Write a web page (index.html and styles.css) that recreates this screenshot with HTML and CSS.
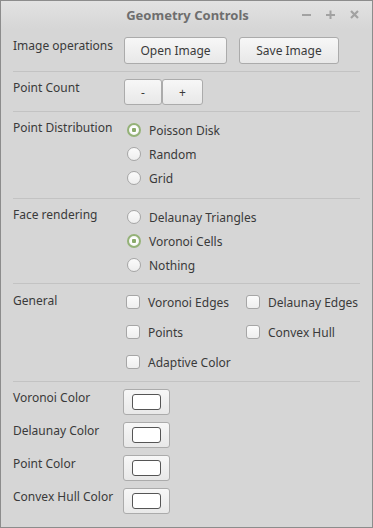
FILE: index.html
```html
<!DOCTYPE html>
<html>
<head>
    <meta charset="utf-8" />
    <title>Geometry Controls</title>
    <link rel="stylesheet" href="styles.css">
</head>
<body>
    <div class="window">
        <div class="titlebar">
            <span class="title">Geometry Controls</span>
            <div class="wm-buttons">
                <span class="wm-btn">
                    <svg width="9" height="9" viewBox="0 0 9 9"><rect x="0" y="4" width="9" height="2" fill="#a2a2a2" /></svg>
                </span>
                <span class="wm-btn">
                    <svg width="9" height="9" viewBox="0 0 9 9"><rect x="0" y="4" width="9" height="2" fill="#a2a2a2" /><rect x="3.5" y="0.5" width="2" height="9" fill="#a2a2a2" /></svg>
                </span>
                <span class="wm-btn">
                    <svg width="9" height="9" viewBox="0 0 9 9"><path d="M1 1 L8 8 M8 1 L1 8" stroke="#a2a2a2" stroke-width="2.2" /></svg>
                </span>
            </div>
        </div>

        <div class="content">
            <div class="section sec-image">
                <label class="title-label">Image operations</label>
                <div class="controls row">
                    <button class="btn btn-open">Open Image</button>
                    <button class="btn btn-save">Save Image</button>
                </div>
            </div>

            <div class="section sec-count">
                <label class="title-label">Point Count</label>
                <div class="controls row">
                    <button class="btn btn-small">-</button>
                    <button class="btn btn-small btn-plus">+</button>
                </div>
            </div>

            <div class="section sec-radio">
                <label class="title-label">Point Distribution</label>
                <div class="controls column">
                    <div class="option"><span class="radio checked"></span>Poisson Disk</div>
                    <div class="option"><span class="radio"></span>Random</div>
                    <div class="option"><span class="radio"></span>Grid</div>
                </div>
            </div>

            <div class="section sec-radio">
                <label class="title-label">Face rendering</label>
                <div class="controls column">
                    <div class="option"><span class="radio"></span>Delaunay Triangles</div>
                    <div class="option"><span class="radio checked"></span>Voronoi Cells</div>
                    <div class="option"><span class="radio"></span>Nothing</div>
                </div>
            </div>

            <div class="section sec-general">
                <label class="title-label">General</label>
                <div class="controls check-grid">
                    <div class="option"><span class="check"></span>Voronoi Edges</div>
                    <div class="option"><span class="check"></span>Delaunay Edges</div>
                    <div class="option"><span class="check"></span>Points</div>
                    <div class="option"><span class="check"></span>Convex Hull</div>
                    <div class="option"><span class="check"></span>Adaptive Color</div>
                </div>
            </div>

            <div class="section sec-colors">
                <div class="color-row">
                    <label class="title-label">Voronoi Color</label>
                    <button class="btn btn-color"><span class="swatch"></span></button>
                </div>
                <div class="color-row">
                    <label class="title-label">Delaunay Color</label>
                    <button class="btn btn-color"><span class="swatch"></span></button>
                </div>
                <div class="color-row">
                    <label class="title-label">Point Color</label>
                    <button class="btn btn-color"><span class="swatch"></span></button>
                </div>
                <div class="color-row">
                    <label class="title-label">Convex Hull Color</label>
                    <button class="btn btn-color"><span class="swatch"></span></button>
                </div>
            </div>
        </div>
    </div>
</body>
</html>
```

FILE: styles.css
```css
* {
    padding: 0;
    margin: 0;
    box-sizing: border-box;
}

body {
    width: 373px;
    height: 528px;
    background: #d6d6d6;
    font-family: "Noto Sans", "Open Sans", sans-serif;
    font-size: 12px;
    color: #3a3a3a;
}

.window {
    width: 373px;
    height: 528px;
    border: 1px solid #8c8c8c;
    background: #d6d6d6;
}

.titlebar {
    height: 28px;
    position: relative;
    display: flex;
    justify-content: center;
    align-items: center;
    background: linear-gradient(#e2e2e2, #d6d6d6);
}

.title {
    font-weight: bold;
    font-size: 13px;
    color: #6e6e6e;
    margin-left: 2px;
}

.wm-buttons {
    position: absolute;
    right: 13px;
    top: 9px;
    display: flex;
    gap: 15px;
}

.wm-btn {
    width: 9px;
    height: 9px;
    display: flex;
}

.content {
    padding: 0 12px;
}

.section {
    display: flex;
    border-bottom: 1px solid #c3c3c3;
}

.section:last-child {
    border-bottom: none;
}

.title-label {
    width: 111px;
    flex: none;
    line-height: 18px;
}

.sec-image {
    padding: 8px 0 7px;
    height: 43px;
}

.row {
    display: flex;
}

.btn {
    font-family: inherit;
    font-size: 12px;
    color: #3a3a3a;
    border: 1px solid #ababab;
    border-radius: 3px;
    background: linear-gradient(#f7f7f7, #e8e8e8);
}

.btn-open {
    width: 103px;
    height: 27px;
}

.btn-save {
    width: 100px;
    height: 27px;
    margin-left: 12px;
}

.sec-count {
    padding: 7px 0 6px;
    height: 40px;
}

.btn-small {
    width: 38px;
    height: 26px;
}

.btn-plus {
    width: 41px;
}

.sec-radio {
    padding: 6px 0 6px;
    height: 87px;
}

.sec-radio:nth-child(4) {
    height: 85px;
}

.sec-radio .title-label {
    padding-top: 1px;
}

.column {
    display: flex;
    flex-direction: column;
}

.option {
    display: flex;
    align-items: center;
    height: 24px;
    white-space: nowrap;
}

.radio {
    width: 14px;
    height: 14px;
    border-radius: 50%;
    border: 1px solid #a6a6a6;
    background: linear-gradient(#fbfbfb, #eeeeee);
    margin: 0 8px 0 3px;
    flex: none;
}

.radio.checked {
    border: 2px solid #94b277;
    background: radial-gradient(circle, #8aaa6b 0, #8aaa6b 2px, #ffffff 2.5px, #f4f4f4 5px);
}

.sec-general {
    padding: 8px 0 0;
    height: 98px;
}

.check-grid {
    display: grid;
    grid-template-columns: 120px auto;
    grid-auto-rows: 30px;
    margin-top: -5px;
}

.check {
    width: 14px;
    height: 14px;
    border-radius: 3px;
    border: 1px solid #a6a6a6;
    background: linear-gradient(#fbfbfb, #eeeeee);
    margin: 0 8px 0 2px;
    flex: none;
}

.check-grid .option {
    height: 30px;
}

.sec-colors {
    flex-direction: column;
    padding: 7px 0 0;
}

.color-row {
    display: flex;
    height: 33px;
}

.btn-color {
    width: 47px;
    height: 26px;
    display: flex;
    align-items: center;
    justify-content: center;
    margin-left: -1px;
}

.swatch {
    width: 29px;
    height: 16px;
    border: 1px solid #555555;
    border-radius: 3px;
    background: #ffffff;
}
```
